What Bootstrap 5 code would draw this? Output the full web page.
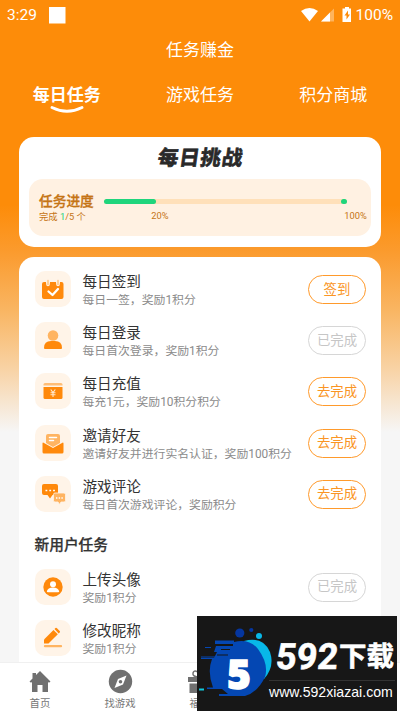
<!DOCTYPE html>
<html lang="zh-CN">
<head>
<meta charset="utf-8">
<meta name="viewport" content="width=device-width, initial-scale=1">
<title>任务赚金</title>
<link href="https://cdn.jsdelivr.net/npm/bootstrap@5.3.0/dist/css/bootstrap.min.css" rel="stylesheet">
<style>
body{font-family:Roboto,"Noto Sans CJK SC",sans-serif;background:#f6f6f6;color:#333;line-height:1}
.screen{width:400px;height:712px;background:linear-gradient(#fd8c09 0,#fd8c09 205px,#fb9b2e 252px,#f9b562 310px,#f8d3a6 370px,#f6f6f6 432px)}
.status{height:29px;padding:0 7px;font-size:15.5px;line-height:28px}
.page-title{height:43px;font-size:17px;line-height:43px}
.tabs{height:65px;font-size:17px;line-height:47px}
.tabs>div{width:133.33px}
.smile{left:50px;top:33px}
.panel{width:362px;border-radius:15px}
.challenge{height:110px;padding:9px 10px}
.challenge h1{font-size:20.5px;line-height:24px;height:32.5px;font-weight:700;transform:skewX(-8deg);color:#292929;-webkit-text-stroke:.7px #292929;letter-spacing:.8px}
.prog{height:57.5px;border-radius:14px;background:#fff1e2;color:#c57415;padding-left:10px}
.prog-label{padding-top:13.5px}
.prog-name{font-size:13.7px;line-height:18px;font-weight:500;-webkit-text-stroke:.3px}
.prog-sub{font-size:9.3px;line-height:13px}
.ink-green{color:#20d47c}
.bar-area{width:243px;margin-left:10px;padding-top:20px}
.track{height:5.5px;border-radius:3px;background:#ffe0b9}
.fill{height:5.5px;border-radius:3px;background:#1fd57c}
.dot{width:5.5px;height:5.5px;border-radius:50%;background:#1fd57c}
.scale{font-size:9.3px;line-height:12px;margin:6px -20px 0 47.5px}
.tasks{padding:14.5px 15px 0 15.5px;height:420px;margin-top:9.5px}
.task{height:51.2px}
.tile{width:36px;height:36px;border-radius:10px;background:#fff4e8}
.task-name{font-size:14.6px;line-height:18px;margin-top:2px}
.task-sub{font-size:11.85px;line-height:17px;margin-top:1px;color:#8b8b8b;white-space:nowrap}
.pill{width:58px;height:29px;border:1.4px solid #ff9a2b;color:#fa9524;font-size:13.4px;line-height:26px;border-radius:15px;margin-top:4px;background:none;padding:0}
.pill.done{border-color:#d6d6d6;color:#c6c6c6}
.section{font-size:14.7px;font-weight:500;line-height:20px;-webkit-text-stroke:.25px;margin:8.500px 0 13.5px}
.tabbar{height:50px;background:#fff;border-top:1px solid #f0f0f0;color:#777}
.tabbar>div{width:80px;padding-top:6px}
.tabbar span{font-size:10.4px;line-height:14px;margin-top:2.5px}
.stamp{left:197px;top:616px;width:200px;height:95px;background:#171717}
.stamp svg{left:0;top:7px}
.stamp-text{left:72px;top:21px;width:126px}
.stamp-name{line-height:40px;height:43px;font-weight:700;-webkit-text-stroke:.6px #fff;white-space:nowrap;padding-left:7px}
.stamp-name .num{font-size:36px;transform:skewX(-5deg);width:63px}
.stamp-name .han{font-size:27.5px}
.stamp-url{font:14.1px/23px "Liberation Sans",sans-serif;border-top:1px solid #333;white-space:nowrap}
</style>
</head>
<body>
<main class="screen position-relative overflow-hidden d-flex flex-column align-items-center">
  <header class="w-100 text-white text-center">
    <div class="status d-flex align-items-center">
      <span>3:29</span>
      <svg class="me-auto" style="margin-left:12px" width="17" height="18" viewBox="0 0 17 18"><rect y="1" width="16.500" height="16.500" fill="#fff"/></svg>
      <svg width="51" height="16" viewBox="0 0 51 16"><path fill="#fff" d="M0 4Q8.500-2 17 4L8.500 14.500z"/><path fill="#fff" fill-opacity=".35" d="M33 1.500V14.500H20z"/><path fill="#fff" d="M29 5.500V14.500H20z"/><path fill="#fff" fill-rule="evenodd" d="M42.500 1.500h1.500V0h4v1.500h2V15H41.500V1.500zM47 3.500l-3.500 5h2v4l3.500-5h-2z"/></svg>
      <span class="ps-1">100%</span>
    </div>
    <div class="page-title">任务赚金</div>
    <nav class="tabs d-flex">
      <div class="fw-bold position-relative">每日任务<svg class="smile position-absolute" width="34" height="9" viewBox="0 0 34 9"><path d="M2 2.500Q17 10 32 2.500" fill="none" stroke="#fff" stroke-width="2.800" stroke-linecap="round"/></svg></div>
      <div>游戏任务</div>
      <div>积分商城</div>
    </nav>
  </header>

  <section class="panel challenge bg-white flex-shrink-0">
    <h1 class="text-center m-0">每日挑战</h1>
    <div class="prog d-flex">
      <div class="prog-label text-nowrap"><div class="prog-name">任务进度</div><div class="prog-sub">完成 <span class="ink-green">1</span>/5 个</div></div>
      <div class="bar-area">
        <div class="track d-flex justify-content-between"><div class="fill" style="width:21.4%"></div><div class="dot"></div></div>
        <div class="scale d-flex justify-content-between"><span>20%</span><span>100%</span></div>
      </div>
    </div>
  </section>

  <section class="panel tasks bg-white flex-shrink-0">
    <div class="task d-flex">
      <div class="tile"><svg width="36" height="36" viewBox="0 0 36 36"><path fill="#ff890b" d="M7 13q0-2 2-2h2a2 2 0 0 0 4 0h6a2 2 0 0 0 4 0h1.500q2 0 2 2v13q0 2-2 2H9q-2 0-2-2z"/><path d="M13 10.500v3M23 10.500v3" stroke="#fff4e8" stroke-width="3.600" stroke-linecap="round"/><path d="M13 9.500v4M23 9.500v4" stroke="#ffc47c" stroke-width="1.500" stroke-linecap="round"/><path d="M13.500 20.500l4 3.500 5.500-6" fill="none" stroke="#fff" stroke-width="2.300" stroke-linecap="round" stroke-linejoin="round"/></svg></div>
      <div class="flex-fill ms-2 px-1"><div class="task-name">每日签到</div><div class="task-sub">每日一签，奖励1积分</div></div>
      <button class="pill">签到</button>
    </div>
    <div class="task d-flex">
      <div class="tile"><svg width="36" height="36" viewBox="0 0 36 36"><path fill="#ff890b" d="M9 26q0-7 7-7h4q7 0 7 7 0 1-1 1H10q-1 0-1-1z"/><circle cx="18" cy="13.500" r="5.300" fill="#ffb461"/></svg></div>
      <div class="flex-fill ms-2 px-1"><div class="task-name">每日登录</div><div class="task-sub">每日首次登录，奖励1积分</div></div>
      <button class="pill done">已完成</button>
    </div>
    <div class="task d-flex">
      <div class="tile"><svg width="36" height="36" viewBox="0 0 36 36"><path d="M8.500 12.500v-1q0-1.500 1.500-1.500h16q1.500 0 1.500 1.500v1z" fill="#ffbd76"/><path d="M8.500 14h19v10.500q0 1.500-1.500 1.500H10q-1.500 0-1.500-1.500z" fill="#ff890b"/><path d="M15.700 16.500l2.300 3 2.300-3M18 19.500V24M15.500 19.800h5M15.500 21.800h5" stroke="#ffe8cc" stroke-width="1.100" fill="none"/></svg></div>
      <div class="flex-fill ms-2 px-1"><div class="task-name">每日充值</div><div class="task-sub">每充1元，奖励10积分积分</div></div>
      <button class="pill">去完成</button>
    </div>
    <div class="task d-flex">
      <div class="tile"><svg width="36" height="36" viewBox="0 0 36 36"><path d="M11 11q0-2 2-2h10q2 0 2 2v7l-7 4-7-4z" fill="#ffb461"/><path d="M14.500 12.500h7M14.500 15.500h4" stroke="#fff" stroke-width="1.500" stroke-linecap="round"/><path d="M7.500 18.500q0-1.500 1.500-.6l9 5.100 9-5.100q1.500-.9 1.500.6V27q0 1.500-1.500 1.500H9q-1.500 0-1.500-1.500z" fill="#ff890b"/></svg></div>
      <div class="flex-fill ms-2 px-1"><div class="task-name">邀请好友</div><div class="task-sub">邀请好友并进行实名认证，奖励100积分</div></div>
      <button class="pill flex-shrink-0">去完成</button>
    </div>
    <div class="task d-flex">
      <div class="tile"><svg width="36" height="36" viewBox="0 0 36 36"><path d="M9 8h12q2 0 2 2v7q0 2-2 2h-3.500L15 22.500 12.500 19H9q-2 0-2-2v-7q0-2 2-2z" fill="#ff890b"/><path d="M20 17h9q1.500 0 1.500 1.500v6q0 1.500-1.500 1.500h-3L24.500 28.500 23 26h-3q-1.500 0-1.500-1.500v-6q0-1.500 1.500-1.500z" fill="#ffb461" stroke="#fff4e8" stroke-width=".8"/><path d="M10.500 14.500H20" stroke="#fff" stroke-width="1.600" stroke-dasharray="1.800 2"/><path d="M21 22h7" stroke="#fff" stroke-width="1.300" stroke-dasharray="1.400 1.300"/></svg></div>
      <div class="flex-fill ms-2 px-1"><div class="task-name">游戏评论</div><div class="task-sub">每日首次游戏评论，奖励积分</div></div>
      <button class="pill">去完成</button>
    </div>
    <h2 class="section">新用户任务</h2>
    <div class="task d-flex">
      <div class="tile"><svg width="36" height="36" viewBox="0 0 36 36"><circle cx="18" cy="18" r="9.700" fill="#ff890b"/><circle cx="18" cy="15.200" r="3" fill="#fff"/><path d="M11.800 22.300q1-3.800 6.200-3.800t6.200 3.800q0 .9-1 .9H12.800q-1 0-1-.9z" fill="#fff"/></svg></div>
      <div class="flex-fill ms-2 px-1"><div class="task-name">上传头像</div><div class="task-sub">奖励1积分</div></div>
      <button class="pill done">已完成</button>
    </div>
    <div class="task d-flex">
      <div class="tile"><svg width="36" height="36" viewBox="0 0 36 36"><path d="M9 23.500v-4L18.500 10l4.300 4.300L13.500 23.500z" fill="#ff890b"/><path d="M19.500 9l1-1q.7-.5 1.500.2l2.700 2.700q.7.800 0 1.500l-1 1z" fill="#ff890b"/><path d="M10 26.200h16" stroke="#ffb461" stroke-width="2.300" stroke-linecap="round"/></svg></div>
      <div class="flex-fill ms-2 px-1"><div class="task-name">修改昵称</div><div class="task-sub">奖励1积分</div></div>
    </div>
  </section>

  <nav class="tabbar w-100 position-absolute bottom-0 start-0 d-flex">
    <div class="d-flex flex-column align-items-center"><svg width="24" height="25" viewBox="0 0 24 25"><path fill="#707070" d="M12 2l10.500 10.500-1.500 1.300-1-.9V23h-5.500v-7h-5v7H4V12.900l-1 .9-1.500-1.300L4.500 9.500V4H8v2z"/></svg><span>首页</span></div>
    <div class="d-flex flex-column align-items-center"><svg width="25" height="25" viewBox="0 0 25 25"><circle cx="12.500" cy="12.500" r="11.700" fill="#707070"/><path fill="#fff" d="M18.500 6.500l-3.500 9-8.500 3.500 3.500-9z"/><circle cx="12.500" cy="12.700" r="1.800" fill="#707070"/></svg><span>找游戏</span></div>
    <div class="d-flex flex-column align-items-center"><svg width="24" height="25" viewBox="0 0 24 25"><path fill="#707070" d="M0 8h24v5H0zM1.500 14.500H11V24H1.500zM13 14.500h9.500V24H13z"/><path d="M12 8Q4 8 5 4q1-3 4-1.500T12 8q0-4 3-5.500T19 4q1 4-7 4" fill="none" stroke="#707070" stroke-width="1.500"/></svg><span>福利</span></div>
  </nav>

  <aside class="stamp position-absolute text-white">
    <svg class="position-absolute" width="78" height="88" viewBox="0 0 78 88">
      <circle cx="42.800" cy="10" r="4.600" fill="#0536a0"/><circle cx="54.300" cy="7" r="2.100" fill="#0536a0"/><circle cx="62" cy="13" r="3" fill="#08b8e8"/>
      <path d="M47 18Q66 13 73 29Q78 44 67 56z" fill="#08b8e8"/>
      <path d="M18 17.500h19v1.500Q52 15 61 26Q72 41 68 54Q61 69 48 73H22v-2h9l-6-5H10v-1.500h6Q10 49 15 36H4v-1h13l3-6h-3l2-6h17v-2H18z" fill="#0447b3"/>
      <path d="M8 24.500h6M4 34h14" stroke="#0447b3" stroke-width="1"/>
      <path d="M20 32h11M24 26.500h9M23 22h13" stroke="#171717" stroke-width="1"/>
      <path d="M2 66.500h5" stroke="#10c8dc" stroke-width="2"/>
      <text x="42" y="66" text-anchor="middle" fill="#fff" stroke="#fff" stroke-width="1.500" font-family="Open Sans,sans-serif" font-size="40" font-weight="800">5</text>
    </svg>
    <div class="stamp-text position-absolute">
      <div class="stamp-name d-flex"><span class="num">592</span><span class="han">下载</span></div>
      <div class="stamp-url">www.592xiazai.com</div>
    </div>
  </aside>
</main>
<script src="https://cdn.jsdelivr.net/npm/bootstrap@5.3.0/dist/js/bootstrap.bundle.min.js"></script>
</body>
</html>
